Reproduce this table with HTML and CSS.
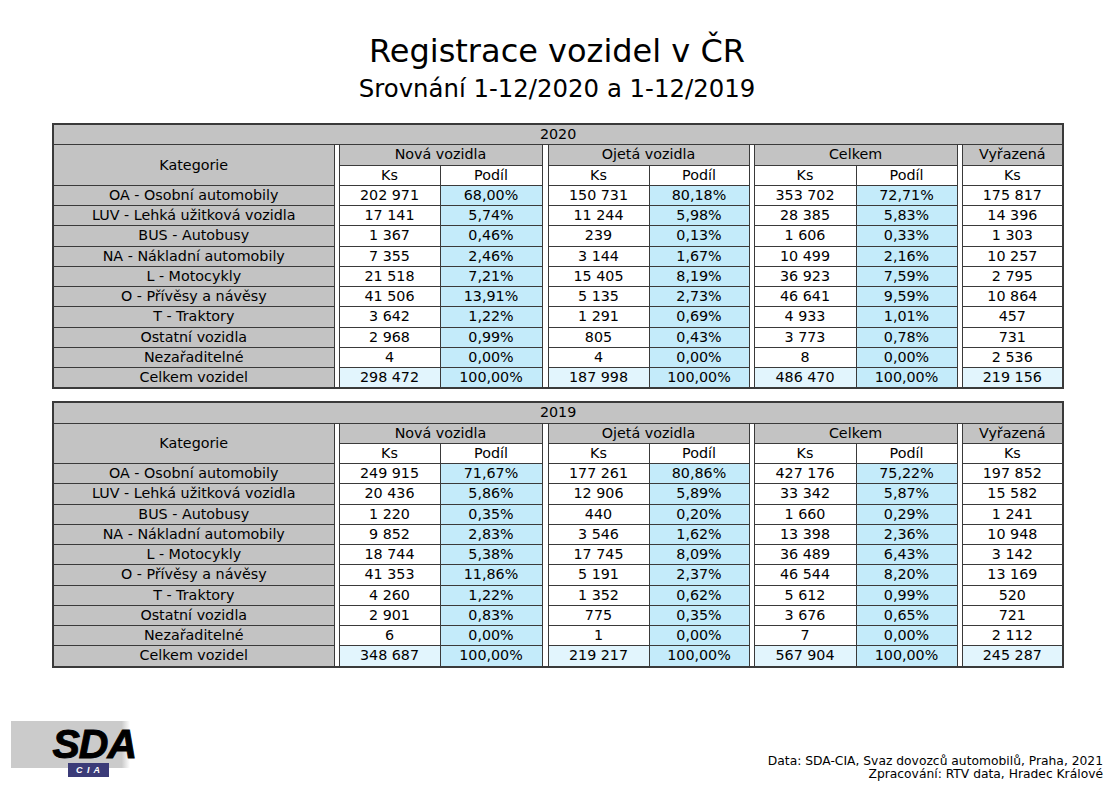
FILE: index.html
```html
<!DOCTYPE html>
<html lang="cs">
<head>
<meta charset="utf-8">
<title>Registrace vozidel v ČR</title>
<link rel="stylesheet" href="styles.css">
</head>
<body>
<div class="page">
  <header class="head">
    <h1 class="title">Registrace vozidel v ČR</h1>
    <p class="subtitle">Srovnání 1-12/2020 a 1-12/2019</p>
  </header>

  <main class="tables">
    <table class="reg">
      <colgroup>
        <col class="c-cat"><col class="c-sp"><col class="c-a"><col class="c-b"><col class="c-sp2"><col class="c-a"><col class="c-c"><col class="c-sp"><col class="c-b"><col class="c-a"><col class="c-sp"><col class="c-a">
      </colgroup>
      <tr class="year"><td colspan="12">2020</td></tr>
      <tr>
        <td class="gray" rowspan="2">Kategorie</td><td class="sp" rowspan="12"></td>
        <td class="gray" colspan="2">Nová vozidla</td><td class="sp" rowspan="12"></td>
        <td class="gray" colspan="2">Ojetá vozidla</td><td class="sp" rowspan="12"></td>
        <td class="gray" colspan="2">Celkem</td><td class="sp" rowspan="12"></td>
        <td class="gray">Vyřazená</td>
      </tr>
      <tr><td>Ks</td><td>Podíl</td><td>Ks</td><td>Podíl</td><td>Ks</td><td>Podíl</td><td>Ks</td></tr>
      <tr><td class="gray">OA - Osobní automobily</td><td>202 971</td><td class="p">68,00%</td><td>150 731</td><td class="p">80,18%</td><td>353 702</td><td class="p">72,71%</td><td>175 817</td></tr>
      <tr><td class="gray">LUV - Lehká užitková vozidla</td><td>17 141</td><td class="p">5,74%</td><td>11 244</td><td class="p">5,98%</td><td>28 385</td><td class="p">5,83%</td><td>14 396</td></tr>
      <tr><td class="gray">BUS - Autobusy</td><td>1 367</td><td class="p">0,46%</td><td>239</td><td class="p">0,13%</td><td>1 606</td><td class="p">0,33%</td><td>1 303</td></tr>
      <tr><td class="gray">NA - Nákladní automobily</td><td>7 355</td><td class="p">2,46%</td><td>3 144</td><td class="p">1,67%</td><td>10 499</td><td class="p">2,16%</td><td>10 257</td></tr>
      <tr><td class="gray">L - Motocykly</td><td>21 518</td><td class="p">7,21%</td><td>15 405</td><td class="p">8,19%</td><td>36 923</td><td class="p">7,59%</td><td>2 795</td></tr>
      <tr><td class="gray">O - Přívěsy a návěsy</td><td>41 506</td><td class="p">13,91%</td><td>5 135</td><td class="p">2,73%</td><td>46 641</td><td class="p">9,59%</td><td>10 864</td></tr>
      <tr><td class="gray">T - Traktory</td><td>3 642</td><td class="p">1,22%</td><td>1 291</td><td class="p">0,69%</td><td>4 933</td><td class="p">1,01%</td><td>457</td></tr>
      <tr><td class="gray">Ostatní vozidla</td><td>2 968</td><td class="p">0,99%</td><td>805</td><td class="p">0,43%</td><td>3 773</td><td class="p">0,78%</td><td>731</td></tr>
      <tr><td class="gray">Nezařaditelné</td><td>4</td><td class="p">0,00%</td><td>4</td><td class="p">0,00%</td><td>8</td><td class="p">0,00%</td><td>2 536</td></tr>
      <tr class="total"><td class="gray">Celkem vozidel</td><td class="t">298 472</td><td class="p">100,00%</td><td class="t">187 998</td><td class="p">100,00%</td><td class="t">486 470</td><td class="p">100,00%</td><td class="t">219 156</td></tr>
    </table>

    <table class="reg">
      <colgroup>
        <col class="c-cat"><col class="c-sp"><col class="c-a"><col class="c-b"><col class="c-sp2"><col class="c-a"><col class="c-c"><col class="c-sp"><col class="c-b"><col class="c-a"><col class="c-sp"><col class="c-a">
      </colgroup>
      <tr class="year"><td colspan="12">2019</td></tr>
      <tr>
        <td class="gray" rowspan="2">Kategorie</td><td class="sp" rowspan="12"></td>
        <td class="gray" colspan="2">Nová vozidla</td><td class="sp" rowspan="12"></td>
        <td class="gray" colspan="2">Ojetá vozidla</td><td class="sp" rowspan="12"></td>
        <td class="gray" colspan="2">Celkem</td><td class="sp" rowspan="12"></td>
        <td class="gray">Vyřazená</td>
      </tr>
      <tr><td>Ks</td><td>Podíl</td><td>Ks</td><td>Podíl</td><td>Ks</td><td>Podíl</td><td>Ks</td></tr>
      <tr><td class="gray">OA - Osobní automobily</td><td>249 915</td><td class="p">71,67%</td><td>177 261</td><td class="p">80,86%</td><td>427 176</td><td class="p">75,22%</td><td>197 852</td></tr>
      <tr><td class="gray">LUV - Lehká užitková vozidla</td><td>20 436</td><td class="p">5,86%</td><td>12 906</td><td class="p">5,89%</td><td>33 342</td><td class="p">5,87%</td><td>15 582</td></tr>
      <tr><td class="gray">BUS - Autobusy</td><td>1 220</td><td class="p">0,35%</td><td>440</td><td class="p">0,20%</td><td>1 660</td><td class="p">0,29%</td><td>1 241</td></tr>
      <tr><td class="gray">NA - Nákladní automobily</td><td>9 852</td><td class="p">2,83%</td><td>3 546</td><td class="p">1,62%</td><td>13 398</td><td class="p">2,36%</td><td>10 948</td></tr>
      <tr><td class="gray">L - Motocykly</td><td>18 744</td><td class="p">5,38%</td><td>17 745</td><td class="p">8,09%</td><td>36 489</td><td class="p">6,43%</td><td>3 142</td></tr>
      <tr><td class="gray">O - Přívěsy a návěsy</td><td>41 353</td><td class="p">11,86%</td><td>5 191</td><td class="p">2,37%</td><td>46 544</td><td class="p">8,20%</td><td>13 169</td></tr>
      <tr><td class="gray">T - Traktory</td><td>4 260</td><td class="p">1,22%</td><td>1 352</td><td class="p">0,62%</td><td>5 612</td><td class="p">0,99%</td><td>520</td></tr>
      <tr><td class="gray">Ostatní vozidla</td><td>2 901</td><td class="p">0,83%</td><td>775</td><td class="p">0,35%</td><td>3 676</td><td class="p">0,65%</td><td>721</td></tr>
      <tr><td class="gray">Nezařaditelné</td><td>6</td><td class="p">0,00%</td><td>1</td><td class="p">0,00%</td><td>7</td><td class="p">0,00%</td><td>2 112</td></tr>
      <tr class="total"><td class="gray">Celkem vozidel</td><td class="t">348 687</td><td class="p">100,00%</td><td class="t">219 217</td><td class="p">100,00%</td><td class="t">567 904</td><td class="p">100,00%</td><td class="t">245 287</td></tr>
    </table>
  </main>

  <footer class="foot">
    <div class="logo">
      <div class="logo-box"><span class="sda">SDA</span></div>
      <div class="cia">C I A</div>
    </div>
    <div class="credits">
      <div>Data: SDA-CIA, Svaz dovozců automobilů, Praha, 2021</div>
      <div>Zpracování: RTV data, Hradec Králové</div>
    </div>
  </footer>
</div>
</body>
</html>
```

FILE: styles.css
```css
html, body {
  margin: 0;
  padding: 0;
  background: #ffffff;
}

body {
  font-family: "DejaVu Sans", Verdana, sans-serif;
  color: #000;
}

.page {
  width: 1114px;
  height: 787px;
  display: flex;
  flex-direction: column;
}

.head {
  text-align: center;
  padding-top: 33px;
}

.title {
  margin: 0;
  font-weight: normal;
  font-size: 32px;
  line-height: 36px;
}

.subtitle {
  margin: 0;
  font-size: 24.4px;
  line-height: 40px;
}

.tables {
  padding: 14px 0 0 52px;
  display: flex;
  flex-direction: column;
  gap: 12px;
}

.reg {
  width: 1010px;
  table-layout: fixed;
  border-collapse: collapse;
  border: 2px solid #3a3a3a;
  font-size: 14.3px;
  font-weight: normal;
}

.c-cat { width: 281px; }
.c-sp { width: 5px; }
.c-sp2 { width: 6px; }
.c-a { width: 101px; }
.c-b { width: 102px; }
.c-c { width: 100px; }

.reg td {
  border: 1px solid #3a3a3a;
  padding: 0;
  height: 19.25px;
  line-height: 19px;
  text-align: center;
  white-space: nowrap;
  overflow: hidden;
  font-weight: normal;
}

.reg .year td {
  background: #c3c3c3;
}

.reg td.gray {
  background: #c3c3c3;
}

.reg td.sp {
  background: #ffffff;
  border-top: none;
  border-bottom: none;
}

.reg td.p {
  background: #c4ebfa;
}

.reg td.t {
  background: #e2f5fd;
}

.foot {
  margin-top: auto;
  display: flex;
  justify-content: space-between;
  align-items: flex-end;
  padding: 0 11px 6px 11px;
}

.logo {
  display: flex;
  flex-direction: column;
  margin-bottom: 4px;
}

.logo-box {
  width: 119px;
  height: 47px;
  background: linear-gradient(to right, #cbcbcb 0%, #cbcbcb 93%, #ffffff 100%);
  display: flex;
  justify-content: flex-end;
  align-items: center;
}

.sda {
  font-family: "Liberation Sans", Arial, sans-serif;
  font-weight: bold;
  font-style: italic;
  font-size: 41px;
  line-height: 32px;
  height: 32px;
  margin-right: -6px;
  margin-top: -2px;
  letter-spacing: -1px;
  -webkit-text-stroke: 1px #000;
  color: #000;
}

.cia {
  margin-left: 57px;
  margin-top: -5px;
  width: 41px;
  height: 14px;
  background: #3b3b78;
  color: #fff;
  font-family: "Liberation Sans", Arial, sans-serif;
  font-weight: bold;
  font-style: italic;
  font-size: 9px;
  line-height: 14px;
  text-align: center;
  letter-spacing: 1px;
}

.credits {
  text-align: right;
  font-size: 12.3px;
  line-height: 13px;
}
```
